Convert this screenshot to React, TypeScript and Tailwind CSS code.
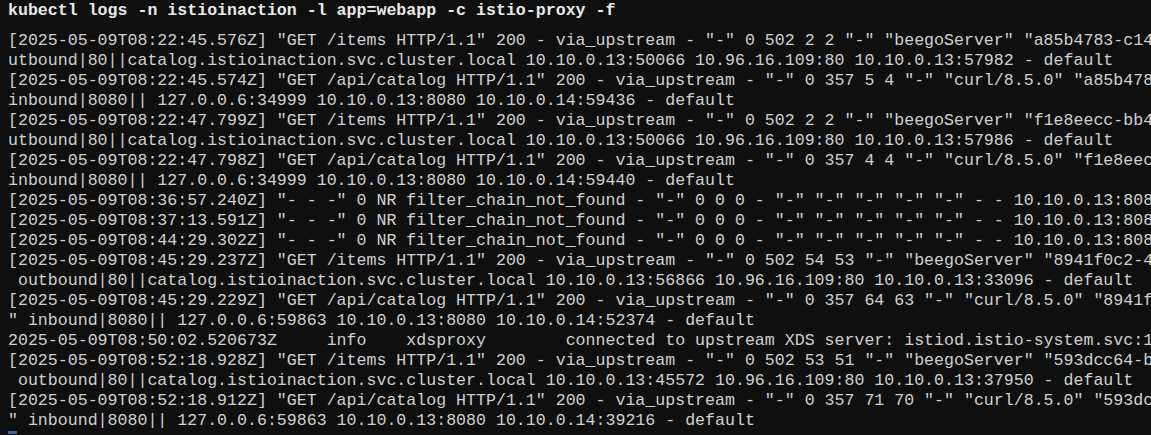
import React from "react";

// lines as they show in the terminal window (the window cuts them at its right edge)
const logLines: string[] = [
  `[2025-05-09T08:22:45.576Z] "GET /items HTTP/1.1" 200 - via_upstream - "-" 0 502 2 2 "-" "beegoServer" "a85b4783-c14`,
  `utbound|80||catalog.istioinaction.svc.cluster.local 10.10.0.13:50066 10.96.16.109:80 10.10.0.13:57982 - default`,
  `[2025-05-09T08:22:45.574Z] "GET /api/catalog HTTP/1.1" 200 - via_upstream - "-" 0 357 5 4 "-" "curl/8.5.0" "a85b478`,
  `inbound|8080|| 127.0.0.6:34999 10.10.0.13:8080 10.10.0.14:59436 - default`,
  `[2025-05-09T08:22:47.799Z] "GET /items HTTP/1.1" 200 - via_upstream - "-" 0 502 2 2 "-" "beegoServer" "f1e8eecc-bb4`,
  `utbound|80||catalog.istioinaction.svc.cluster.local 10.10.0.13:50066 10.96.16.109:80 10.10.0.13:57986 - default`,
  `[2025-05-09T08:22:47.798Z] "GET /api/catalog HTTP/1.1" 200 - via_upstream - "-" 0 357 4 4 "-" "curl/8.5.0" "f1e8eec`,
  `inbound|8080|| 127.0.0.6:34999 10.10.0.13:8080 10.10.0.14:59440 - default`,
  `[2025-05-09T08:36:57.240Z] "- - -" 0 NR filter_chain_not_found - "-" 0 0 0 - "-" "-" "-" "-" "-" - - 10.10.0.13:808`,
  `[2025-05-09T08:37:13.591Z] "- - -" 0 NR filter_chain_not_found - "-" 0 0 0 - "-" "-" "-" "-" "-" - - 10.10.0.13:808`,
  `[2025-05-09T08:44:29.302Z] "- - -" 0 NR filter_chain_not_found - "-" 0 0 0 - "-" "-" "-" "-" "-" - - 10.10.0.13:808`,
  `[2025-05-09T08:45:29.237Z] "GET /items HTTP/1.1" 200 - via_upstream - "-" 0 502 54 53 "-" "beegoServer" "8941f0c2-4`,
  ` outbound|80||catalog.istioinaction.svc.cluster.local 10.10.0.13:56866 10.96.16.109:80 10.10.0.13:33096 - default`,
  `[2025-05-09T08:45:29.229Z] "GET /api/catalog HTTP/1.1" 200 - via_upstream - "-" 0 357 64 63 "-" "curl/8.5.0" "8941f`,
  `" inbound|8080|| 127.0.0.6:59863 10.10.0.13:8080 10.10.0.14:52374 - default`,
  `2025-05-09T08:50:02.520673Z     info    xdsproxy        connected to upstream XDS server: istiod.istio-system.svc:1`,
  `[2025-05-09T08:52:18.928Z] "GET /items HTTP/1.1" 200 - via_upstream - "-" 0 502 53 51 "-" "beegoServer" "593dcc64-b`,
  ` outbound|80||catalog.istioinaction.svc.cluster.local 10.10.0.13:45572 10.96.16.109:80 10.10.0.13:37950 - default`,
  `[2025-05-09T08:52:18.912Z] "GET /api/catalog HTTP/1.1" 200 - via_upstream - "-" 0 357 71 70 "-" "curl/8.5.0" "593dc`,
  `" inbound|8080|| 127.0.0.6:59863 10.10.0.13:8080 10.10.0.14:39216 - default`,
];

export default function App() {
  return (
    <div className="w-[1151px] h-[435px] overflow-hidden bg-[#0f0f0f] text-[#d0d0d0] font-['Liberation_Mono',monospace] text-[16.6px] leading-5 pl-2 pt-[1px]">
      <div className="whitespace-pre font-bold text-[#e8e8e8]">
        kubectl logs -n istioinaction -l app=webapp -c istio-proxy -f
      </div>
      <div className="mt-[10px]">
        {logLines.map((line, i) => (
          <div key={i} className="whitespace-pre">
            {line}
          </div>
        ))}
      </div>
      <div className="w-[9px] h-[3px] bg-[#3566a6]" />
    </div>
  );
}
